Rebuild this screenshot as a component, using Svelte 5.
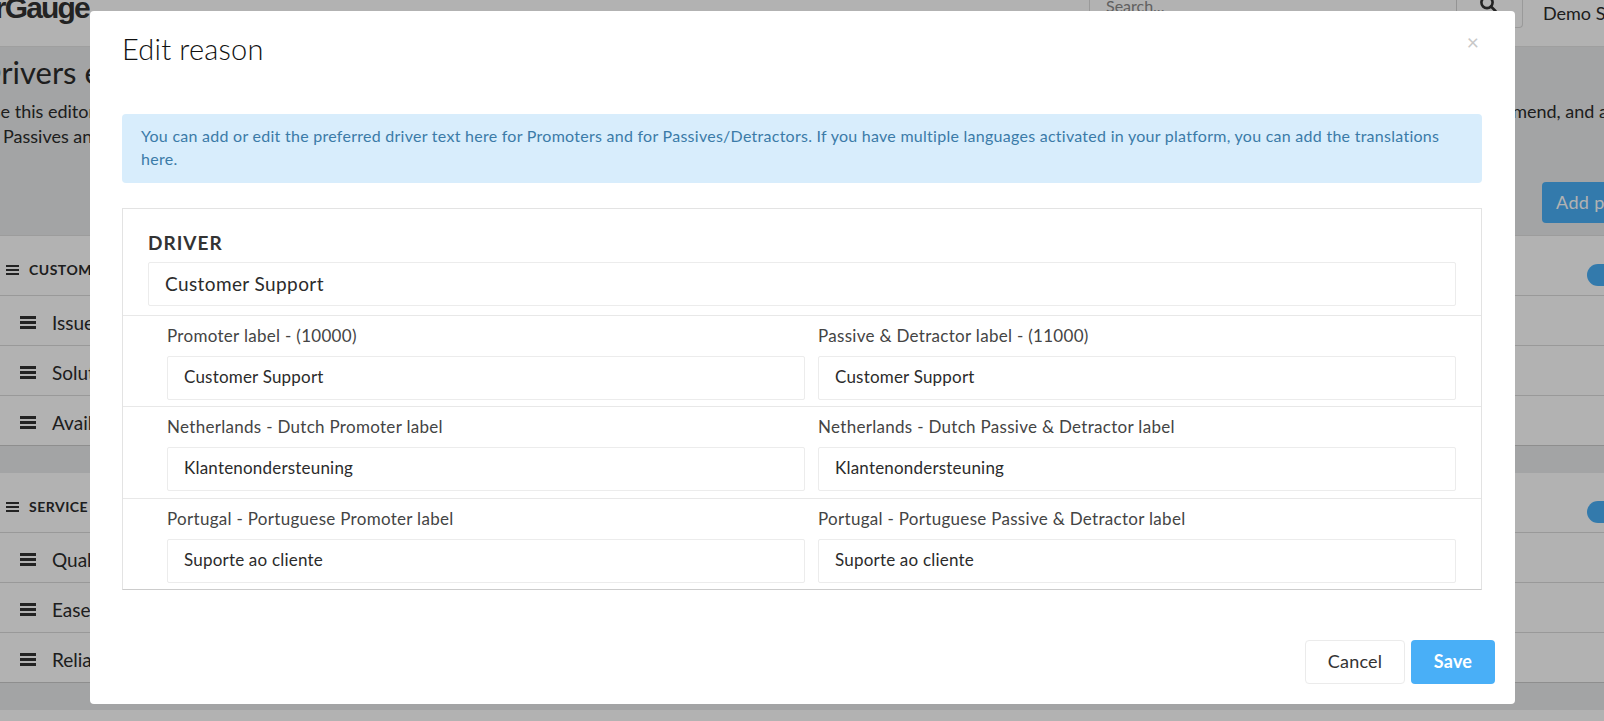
<script>
  const groups = [
    { name: 'CUSTOMER SERVICE', rows: ['Issues', 'Solutions', 'Availability'] },
    { name: 'SERVICE QUALITY', rows: ['Quality', 'Ease of use', 'Reliability'] }
  ];
  const translations = [
    { left: 'Promoter label - (10000)', right: 'Passive & Detractor label - (11000)', value: 'Customer Support' },
    { left: 'Netherlands - Dutch Promoter label', right: 'Netherlands - Dutch Passive & Detractor label', value: 'Klantenondersteuning' },
    { left: 'Portugal - Portuguese Promoter label', right: 'Portugal - Portuguese Passive & Detractor label', value: 'Suporte ao cliente' }
  ];
</script>

<div class="page">
  <header class="topbar">
    <div class="logo"><span>CustomerGauge</span></div>
    <div class="search">
      <div class="search-input">Search...</div>
      <div class="search-btn">
        <svg width="18" height="18" viewBox="0 0 18 18" fill="none" stroke="#333" stroke-width="2.6">
          <circle cx="8" cy="7.5" r="5.6" />
          <path d="M12 11.5l4.5 4.5" stroke-linecap="round" />
        </svg>
      </div>
    </div>
    <div class="demo">Demo Site</div>
  </header>

  <section class="intro">
    <h1>Drivers editor</h1>
    <p class="p1"><span class="p1-left">Use this editor to change the order</span><span class="p1-right">recommend, and add</span></p>
    <p class="p2">Passives and Detractors</p>
    <div class="actions"><button class="add">Add parent</button></div>
  </section>

  {#each groups as g}
    <section class="group">
      <div class="group-head">
        <svg class="bars small" viewBox="0 0 13 10"><path d="M0 0h13v2H0zM0 4h13v2H0zM0 8h13v2H0z" /></svg>
        <strong>{g.name}</strong>
        <span class="toggle"></span>
      </div>
      {#each g.rows as r}
        <div class="group-row">
          <svg class="bars" viewBox="0 0 16 13"><path d="M0 0h16v3H0zM0 5h16v3H0zM0 10h16v3H0z" /></svg>
          <span>{r}</span>
        </div>
      {/each}
    </section>
    <div class="gap"></div>
  {/each}
</div>

<div class="backdrop">
  <div class="modal">
    <div class="modal-head">
      <h2>Edit reason</h2>
      <span class="close">×</span>
    </div>

    <div class="alert">You can add or edit the preferred driver text here for Promoters and for Passives/Detractors. If you have multiple languages activated in your platform, you can add the translations here.</div>

    <div class="panel">
      <div class="driver">
        <div class="driver-label">DRIVER</div>
        <div class="field big">Customer Support</div>
      </div>
      {#each translations as t}
        <div class="row">
          <div class="col">
            <div class="label">{t.left}</div>
            <div class="field">{t.value}</div>
          </div>
          <div class="col">
            <div class="label">{t.right}</div>
            <div class="field">{t.value}</div>
          </div>
        </div>
      {/each}
    </div>

    <div class="footer">
      <button class="cancel">Cancel</button>
      <button class="save">Save</button>
    </div>
  </div>
</div>

<style>
  :global(body) {
    margin: 0;
    background: #fff;
    overflow: hidden;
    font-family: Lato, "Noto Sans", sans-serif;
    color: #2b2b2b;
  }
  .page {
    width: 1604px;
    height: 721px;
    overflow: hidden;
    background: #fff;
  }
  .topbar {
    height: 46px;
    display: flex;
    align-items: flex-start;
    border-bottom: 1px solid #e4e4e4;
  }
  .logo {
    width: 90px;
    height: 46px;
    display: flex;
    justify-content: flex-end;
    overflow: hidden;
    flex: none;
  }
  .logo span {
    font-family: "Liberation Sans", sans-serif;
    font-weight: 700;
    font-size: 30px;
    letter-spacing: -1.8px;
    line-height: 30px;
    margin: -7px 1px 0 0;
    color: #333;
    white-space: nowrap;
  }
  .search {
    display: flex;
    margin-left: 999px;
    height: 28px;
    width: 434px;
    flex: none;
  }
  .search-input {
    flex: 1;
    border: 1px solid #ddd;
    border-top: 0;
    border-right-color: #d4d4d4;
    padding-left: 16px;
    font-size: 16px;
    line-height: 12px;
    color: #8a8a8a;
    overflow: hidden;
  }
  .search-btn {
    width: 66px;
    border: 1px solid #ddd;
    border-left: 0;
    border-top: 0;
    border-radius: 0 0 4px 4px;
    display: flex;
    justify-content: center;
    align-items: flex-start;
    overflow: hidden;
    padding-right: 4px;
    box-sizing: border-box;
  }
  .search-btn svg {
    margin-top: -5px;
  }
  .demo {
    margin-left: 20px;
    font-size: 18px;
    line-height: 26px;
    white-space: nowrap;
  }
  .intro {
    height: 189px;
    background: #eaebec;
    border-bottom: 1px solid #e0e0e0;
    box-sizing: border-box;
    display: flex;
    flex-direction: column;
  }
  .intro h1 {
    margin: 6px 0 0 -22px;
    font-size: 31px;
    font-weight: 400;
    line-height: 38px;
    white-space: nowrap;
  }
  .intro p {
    margin: 0;
    font-size: 18px;
    line-height: 25px;
    white-space: nowrap;
  }
  .p1 {
    padding-top: 8px;
    display: flex;
  }
  .p1-left {
    flex: 1;
    margin-left: -20px;
  }
  .p1-right {
    width: 141px;
    flex: none;
  }
  .p2 {
    margin-left: 3px !important;
  }
  .actions {
    margin-top: 33px;
    padding-left: 1542px;
  }
  .add {
    width: 130px;
    height: 41px;
    background: #49aff7;
    color: #fff;
    border: 0;
    border-radius: 4px;
    font: inherit;
    font-size: 18px;
    letter-spacing: 0.4px;
    text-align: left;
    padding: 0 14px 2px;
    white-space: nowrap;
  }
  .group-head {
    height: 60px;
    position: relative;
    display: flex;
    align-items: center;
    border-bottom: 1px solid #dcdcdc;
    box-sizing: border-box;
    padding: 8px 0 0 6px;
    gap: 10px;
    font-size: 14px;
    letter-spacing: 0.5px;
  }
  .toggle {
    width: 60px;
    height: 22px;
    border-radius: 11px;
    background: #49aff7;
    position: absolute;
    left: 1587px;
    top: 28px;
  }
  .group-row {
    height: 50px;
    display: flex;
    align-items: center;
    border-bottom: 1px solid #dcdcdc;
    box-sizing: border-box;
    padding: 3px 0 0 20px;
    gap: 16px;
    font-size: 19px;
  }
  .group-row:last-child {
    border-bottom-color: #ccc;
  }
  .bars {
    width: 16px;
    height: 13px;
    fill: #333;
    flex: none;
  }
  .bars.small {
    width: 13px;
    height: 10px;
  }
  .gap {
    height: 27px;
    background: #eaebec;
  }
  .backdrop {
    position: fixed;
    inset: 0;
    background: rgba(0, 0, 0, 0.3);
  }
  .modal {
    width: 1425px;
    height: 693px;
    margin: 11px 0 0 90px;
    background: #fff;
    border-radius: 4px;
    box-sizing: border-box;
    padding: 0 33px 0 32px;
    display: flex;
    flex-direction: column;
  }
  .modal-head {
    height: 103px;
    display: flex;
    justify-content: space-between;
    align-items: flex-start;
    flex: none;
  }
  .modal-head h2 {
    margin: 20px 0 0 0;
    font-size: 29px;
    line-height: 36px;
    font-weight: 300;
    letter-spacing: 0.2px;
    color: #111;
  }
  .close {
    margin: 19px 3px 0 0;
    font-size: 21px;
    line-height: 24px;
    color: #c8c8c8;
  }
  .alert {
    height: 69px;
    box-sizing: border-box;
    padding: 10px 19px;
    background: #d8edfc;
    color: #3b7ba8;
    border-radius: 4px;
    font-size: 16px;
    letter-spacing: 0.265px;
    line-height: 23px;
    flex: none;
  }
  .panel {
    margin-top: 25px;
    height: 382px;
    box-sizing: border-box;
    border: 1px solid #e3e3e3;
    border-bottom-color: #ccc;
    flex: none;
  }
  .driver {
    height: 106px;
    box-sizing: border-box;
    padding: 22px 25px 0;
  }
  .driver-label {
    font-size: 19px;
    font-weight: 700;
    letter-spacing: 1px;
    line-height: 24px;
    color: #333;
    margin-bottom: 7px;
  }
  .field {
    height: 44px;
    box-sizing: border-box;
    border: 1px solid #ececec;
    border-radius: 2px;
    padding: 0 0 3px 16px;
    display: flex;
    align-items: center;
    font-size: 17px;
    letter-spacing: 0.2px;
    color: #2b2b2b;
  }
  .field.big {
    font-size: 19px;
    letter-spacing: 0.4px;
    padding-bottom: 2px;
  }
  .row {
    height: 91.33px;
    box-sizing: border-box;
    border-top: 1px solid #e8e8e8;
    padding: 0 25px 0 44px;
    display: grid;
    grid-template-columns: 1fr 1fr;
    column-gap: 13px;
  }
  .label {
    font-size: 17px;
    letter-spacing: 0.3px;
    line-height: 40px;
    color: #444;
    white-space: nowrap;
  }
  .footer {
    margin-top: 50px;
    display: flex;
    justify-content: flex-end;
    gap: 6px;
    margin-right: -13px;
  }
  .footer button {
    height: 44px;
    border-radius: 4px;
    font: inherit;
    font-size: 18px;
    letter-spacing: 0.2px;
    padding-bottom: 3px;
  }
  .cancel {
    width: 100px;
    background: #fff;
    border: 1px solid #ebebeb;
    color: #333;
  }
  .save {
    width: 84px;
    background: #49aff7;
    border: 0;
    color: #fff;
    font-weight: 700 !important;
  }
</style>
